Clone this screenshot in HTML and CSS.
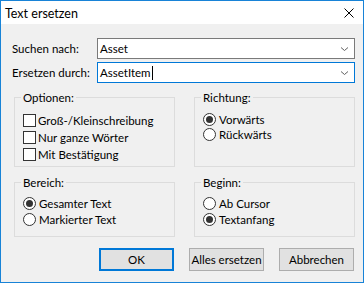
FILE: index.html
```html
<!DOCTYPE html>
<html lang="de">
<head>
    <meta charset="UTF-8">
    <title>Text ersetzen</title>
    <link rel="stylesheet" href="styles.css">
</head>
<body>
    <div class="window">
        <div class="titlebar">
            <span class="title">Text ersetzen</span>
            <svg class="close" width="10" height="10" viewBox="0 0 10 10">
                <path d="M0.5 0.5 L9.5 9.5 M9.5 0.5 L0.5 9.5" stroke="#000" stroke-width="1" fill="none"/>
            </svg>
        </div>

        <div class="content">
            <div class="fields">
                <label>Suchen nach:</label>
                <div class="combo">
                    <span class="value">Asset</span>
                    <svg class="chevron" width="7" height="4" viewBox="0 0 7 4">
                        <polyline points="0,0.5 3.5,3.5 7,0.5" stroke="#606060" fill="none"/>
                    </svg>
                </div>
                <label>Ersetzen durch:</label>
                <div class="combo focused">
                    <span class="value">AssetItem<span class="caret"></span></span>
                    <svg class="chevron" width="7" height="4" viewBox="0 0 7 4">
                        <polyline points="0,0.5 3.5,3.5 7,0.5" stroke="#606060" fill="none"/>
                    </svg>
                </div>
            </div>

            <div class="groups">
                <fieldset class="group checks">
                    <legend>Optionen:</legend>
                    <div class="opt"><span class="check"></span>Groß-/Kleinschreibung</div>
                    <div class="opt"><span class="check"></span>Nur ganze Wörter</div>
                    <div class="opt"><span class="check"></span>Mit Bestätigung</div>
                </fieldset>

                <fieldset class="group direction">
                    <legend>Richtung:</legend>
                    <div class="opt"><span class="radio on"></span>Vorwärts</div>
                    <div class="opt"><span class="radio"></span>Rückwärts</div>
                </fieldset>

                <fieldset class="group scope">
                    <legend>Bereich:</legend>
                    <div class="opt"><span class="radio on"></span>Gesamter Text</div>
                    <div class="opt"><span class="radio"></span>Markierter Text</div>
                </fieldset>

                <fieldset class="group scope">
                    <legend>Beginn:</legend>
                    <div class="opt"><span class="radio"></span>Ab Cursor</div>
                    <div class="opt"><span class="radio on"></span>Textanfang</div>
                </fieldset>
            </div>

            <div class="buttons">
                <button class="default">OK</button>
                <button>Alles ersetzen</button>
                <button>Abbrechen</button>
            </div>
        </div>
    </div>
</body>
</html>
```

FILE: styles.css
```css
* {
    margin: 0;
    padding: 0;
    box-sizing: border-box;
}

body {
    font-family: 'Lato', 'Liberation Sans', sans-serif;
    font-size: 11.5px;
    color: #000;
    background: #fff;
}

.window {
    width: 364px;
    height: 283px;
    border: 1px solid #1883d7;
    display: flex;
    flex-direction: column;
}

.titlebar {
    height: 23px;
    background: #fff;
    display: flex;
    align-items: center;
    padding: 1px 9px 0 4px;
}

.title {
    font-size: 12.5px;
    flex: 1;
}

.content {
    flex: 1;
    background: #f0f0f0;
    padding: 14px 8px 0 11px;
}

.fields {
    display: grid;
    grid-template-columns: 85px 1fr;
    row-gap: 3px;
    align-items: center;
}

.combo {
    height: 21px;
    border: 1px solid #7a7a7a;
    background: #fff;
    display: flex;
    align-items: center;
    padding: 0 6px 0 2px;
}

.combo.focused {
    border-color: #0078d7;
}

.combo .value {
    flex: 1;
    display: flex;
    align-items: center;
}

.caret {
    display: inline-block;
    width: 1px;
    height: 14px;
    background: #000;
    margin-left: 1px;
}

.groups {
    display: grid;
    grid-template-columns: 1fr 1fr;
    column-gap: 19px;
    row-gap: 8px;
    margin: 7px 0 0 2px;
}

.group {
    border: 1px solid #dcdcdc;
    padding: 7px 8px 3px;
    min-width: 0;
}

.group legend {
    line-height: 15px;
    padding: 0 2px;
    margin-left: -2px;
}

.opt {
    display: flex;
    align-items: center;
    gap: 3px;
    height: 17px;
}

.direction .opt {
    height: 15px;
}

.scope {
    padding: 5px 8px 9px;
}

.scope .opt {
    height: 16px;
}

.check {
    width: 13px;
    height: 13px;
    border: 1px solid #333;
    background: #fff;
    margin-right: -1px;
}

.radio {
    width: 13px;
    height: 13px;
    border: 1px solid #333;
    border-radius: 50%;
    background: #fff;
    display: flex;
    align-items: center;
    justify-content: center;
}

.radio.on::after {
    content: '';
    width: 7px;
    height: 7px;
    border-radius: 50%;
    background: #333;
}

.buttons {
    display: flex;
    justify-content: flex-end;
    gap: 15px;
    margin: 11px 1px 0 0;
}

button {
    width: 75px;
    height: 23px;
    background: #e1e1e1;
    border: 1px solid #adadad;
    font-family: inherit;
    font-size: 11.5px;
    color: #000;
}

button.default {
    border: 2px solid #0078d7;
}
```
